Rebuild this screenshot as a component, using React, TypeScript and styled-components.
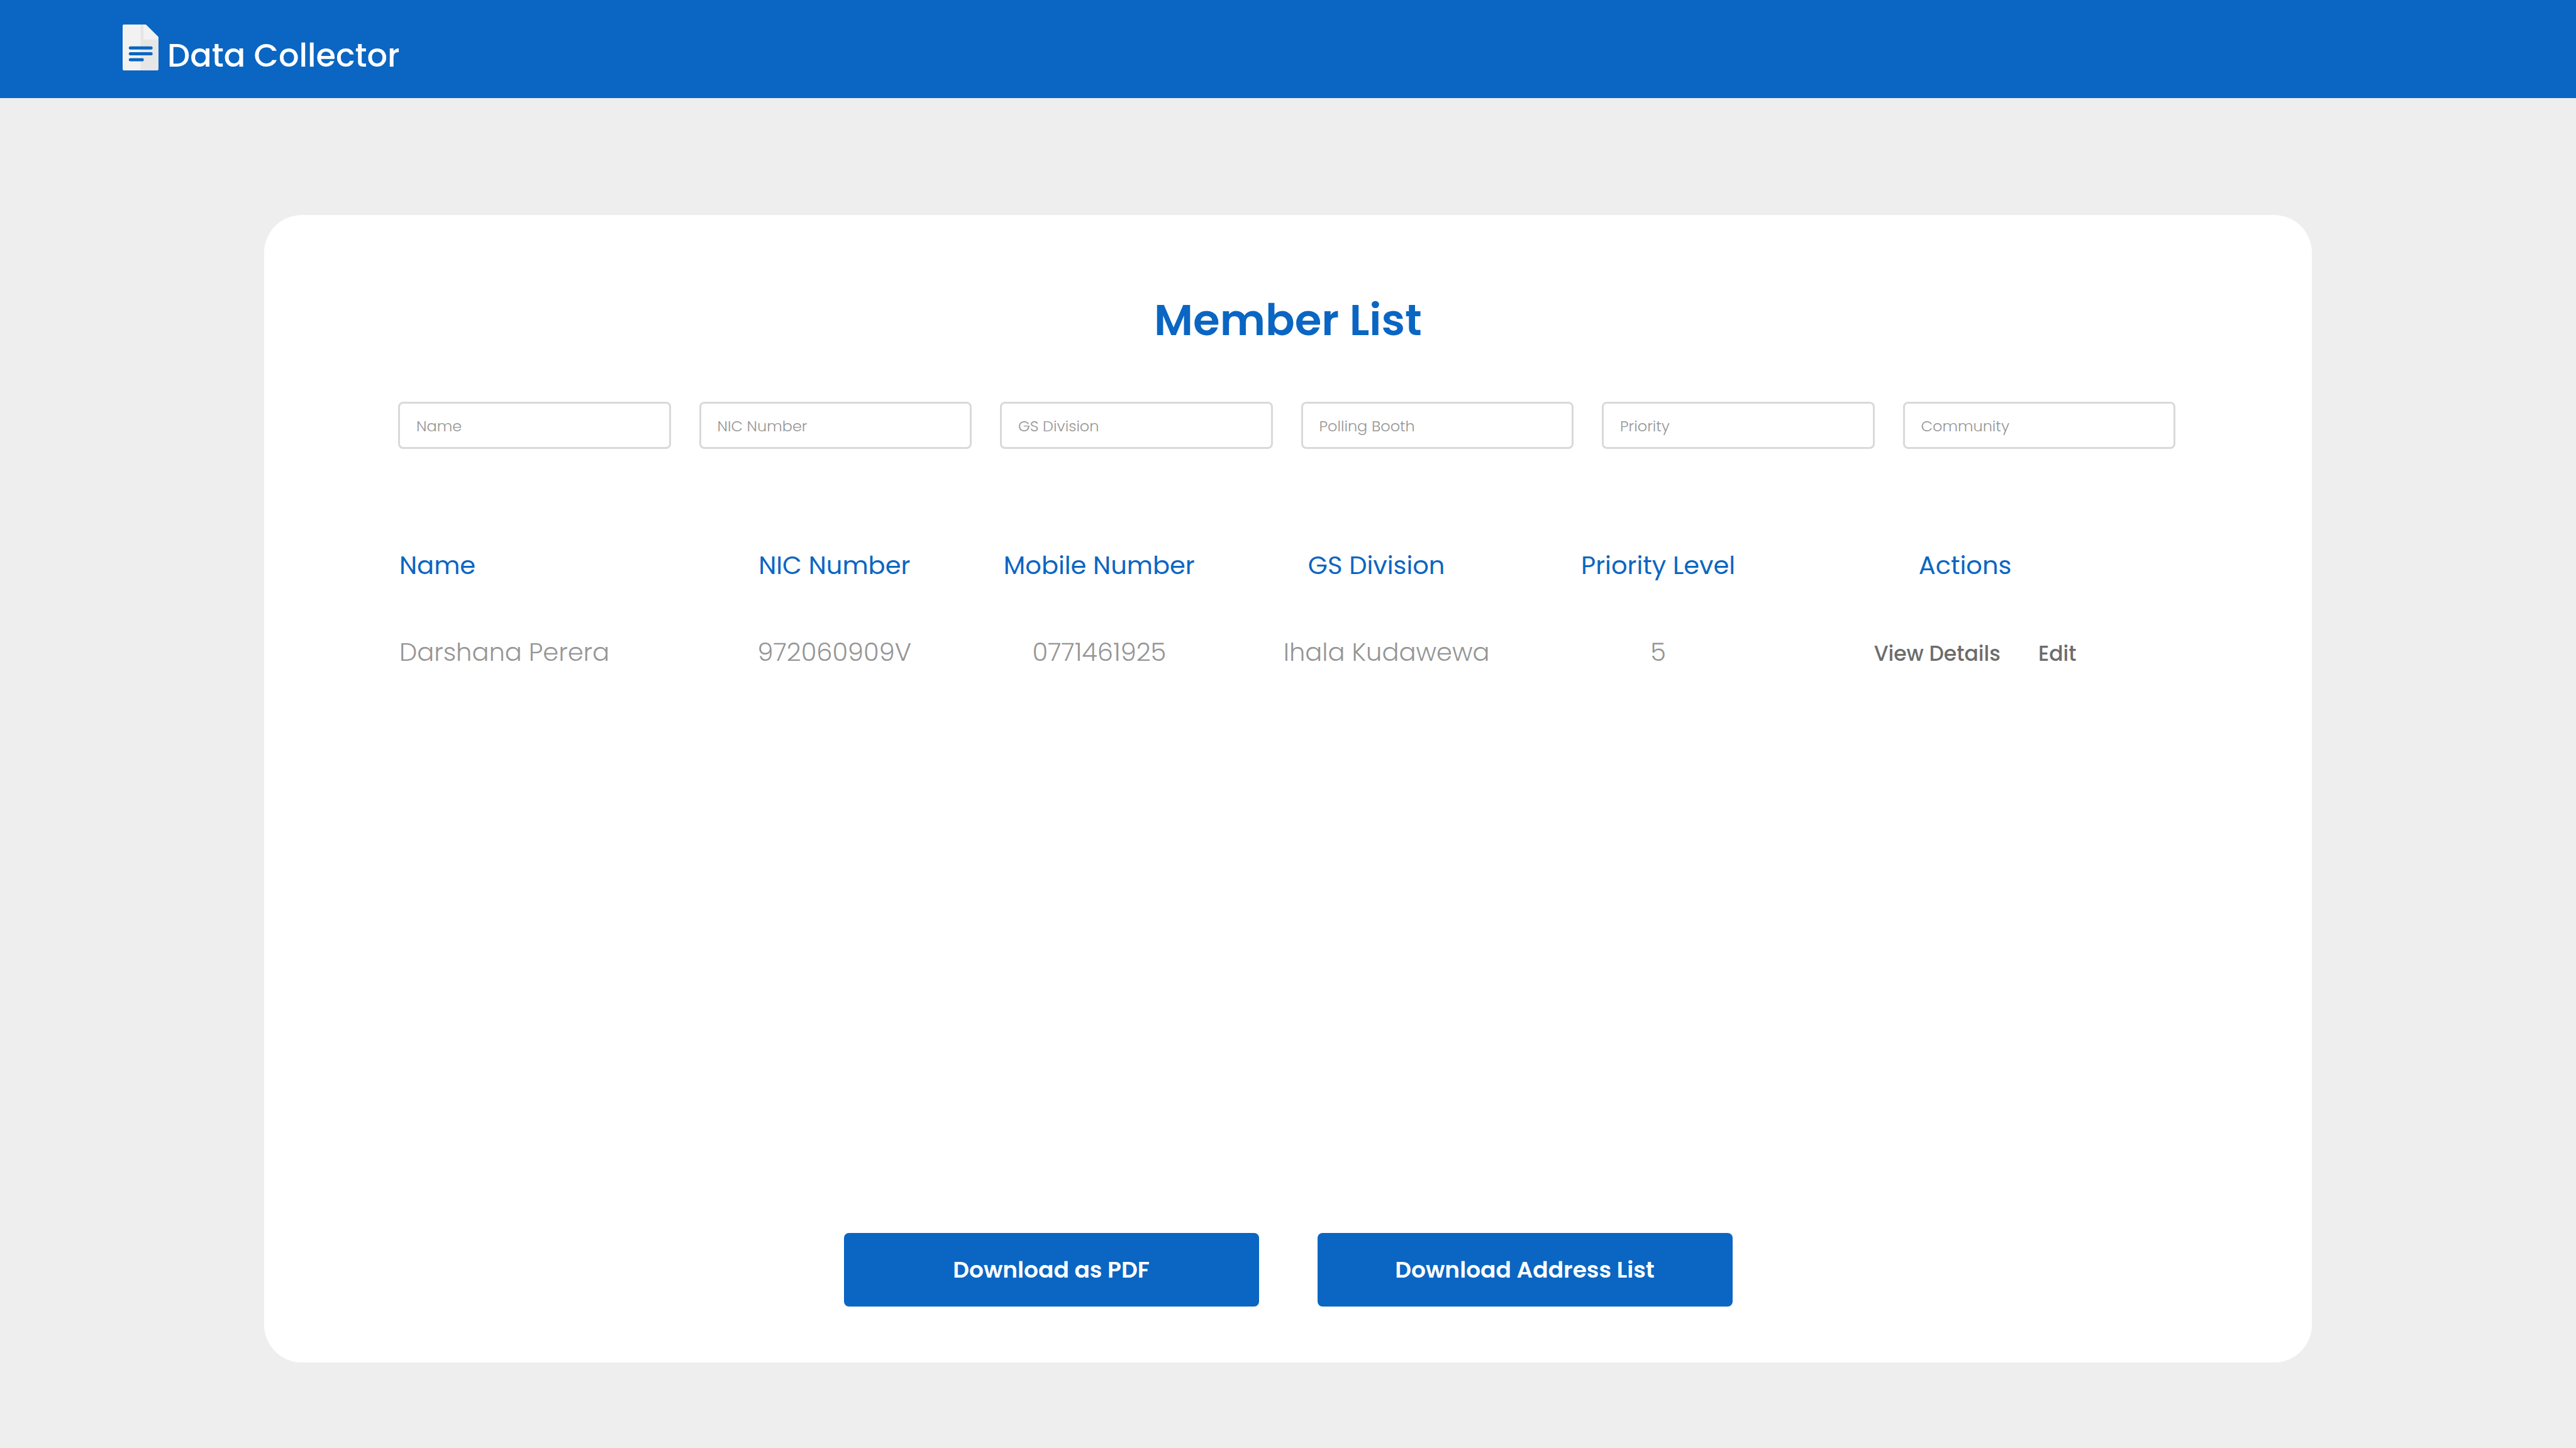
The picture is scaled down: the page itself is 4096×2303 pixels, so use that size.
import React from "react";
import styled, { createGlobalStyle } from "styled-components";

const colors = {
  brand: "#0a66c2",
  page: "#eeeeee",
  card: "#ffffff",
  border: "#d9d9d9",
  muted: "#959595",
  action: "#6c6c6c",
};

const GlobalStyle = createGlobalStyle`
  *, *::before, *::after {
    box-sizing: border-box;
  }

  body {
    margin: 0;
    background: ${colors.page};
    font-family: Poppins, Inter, "Open Sans", sans-serif;
  }

  button, input {
    font-family: inherit;
  }
`;

const Page = styled.div`
  display: flex;
  flex-direction: column;
  min-height: 100vh;
`;

const Header = styled.header`
  display: flex;
  align-items: flex-start;
  height: 156px;
  padding: 39px 195px 0;
  background: ${colors.brand};
`;

const Brand = styled.a`
  display: flex;
  align-items: flex-end;
  gap: 14px;
  color: #ffffff;
  font-size: 51px;
  font-weight: 500;
  line-height: 48px;
  text-decoration: none;
  white-space: nowrap;
`;

const BrandIcon = styled.svg`
  display: block;
  width: 57px;
  height: 73px;
`;

const Main = styled.main`
  display: flex;
  flex: 1;
  padding: 186px 420px 136px;
`;

const Card = styled.section`
  display: flex;
  flex: 1;
  flex-direction: column;
  min-width: 0;
  padding: 127px 213px 89px;
  border-radius: 60px;
  background: ${colors.card};
`;

const Title = styled.h1`
  margin: 0;
  color: ${colors.brand};
  font-size: 69px;
  font-weight: 600;
  line-height: 80px;
  text-align: center;
`;

const Content = styled.div`
  padding: 90px 4px 90px 0;
`;

const Filters = styled.form`
  display: grid;
  grid-template-columns: repeat(6, minmax(0, 1fr));
  gap: 45px;
`;

const FilterInput = styled.input`
  width: 100%;
  height: 75px;
  padding: 2px 26px 0;
  border: 3px solid ${colors.border};
  border-radius: 8px;
  outline: none;
  background: ${colors.card};
  color: ${colors.action};
  font-size: 24px;
  font-weight: 300;

  &::placeholder {
    color: ${colors.muted};
    opacity: 1;
  }

  &:focus {
    border-color: ${colors.brand};
  }
`;

const Table = styled.table`
  width: 100%;
  margin-top: 157px;
  border-collapse: collapse;
  table-layout: fixed;
  font-size: 40px;
  line-height: 56px;
`;

const Column = styled.col<{ $width?: string }>`
  width: ${(p) => p.$width ?? "auto"};
`;

type CellProps = { $align?: "left" | "center"; $before?: number; $after?: number };

const HeadCell = styled.th<CellProps>`
  padding: 0 ${(p) => p.$after ?? 0}px 0 ${(p) => p.$before ?? 0}px;
  color: ${colors.brand};
  font-weight: 400;
  text-align: ${(p) => p.$align ?? "center"};
  white-space: nowrap;
`;

const Cell = styled.td<CellProps>`
  padding: 82px ${(p) => p.$after ?? 0}px 0 ${(p) => p.$before ?? 0}px;
  color: ${colors.muted};
  font-weight: 300;
  text-align: ${(p) => p.$align ?? "center"};
  white-space: nowrap;
`;

const ActionLink = styled.a`
  color: ${colors.action};
  font-size: 33px;
  font-weight: 500;
  line-height: 40px;
  text-decoration: none;

  & + & {
    margin-left: 60px;
  }
`;

const Downloads = styled.div`
  display: flex;
  justify-content: center;
  gap: 93px;
  margin-top: auto;
`;

const DownloadButton = styled.button`
  width: 660px;
  height: 117px;
  padding: 0;
  border: 0;
  border-radius: 8px;
  background: ${colors.brand};
  color: #ffffff;
  cursor: pointer;
  font-size: 36px;
  font-weight: 600;
`;

const filters = ["Name", "NIC Number", "GS Division", "Polling Booth", "Priority", "Community"];

const members = [
  {
    name: "Darshana Perera",
    nic: "972060909V",
    mobile: "0771461925",
    division: "Ihala Kudawewa",
    priority: 5,
  },
];

function DocumentIcon() {
  return (
    <BrandIcon viewBox="0 0 57 73" aria-hidden="true">
      <path d="M2 0H29V73H2Q0 73 0 71V2Q0 0 2 0Z" fill="#f2f2f2" />
      <path d="M28.5 0H36.5L57 20V71Q57 73 55 73H28.5Z" fill="#e6e6e6" />
      <path d="M33 0H36Q37 0 38 1L56 19Q57 20 57 21V23.7H35Q33 23.7 33 21.7Z" fill="#f2f2f2" />
      <path
        d="M12.3 37.3H45.2M12.3 46.6H45.2M12.3 56H31.2"
        fill="none"
        stroke={colors.brand}
        strokeWidth="5"
        strokeLinecap="round"
      />
    </BrandIcon>
  );
}

export default function App() {
  return (
    <>
      <GlobalStyle />
      <Page>
        <Header>
          <Brand href="#">
            <DocumentIcon />
            Data Collector
          </Brand>
        </Header>
        <Main>
          <Card>
            <Title>Member List</Title>
            <Content>
              <Filters>
                {filters.map((label) => (
                  <FilterInput key={label} type="text" placeholder={label} aria-label={label} />
                ))}
              </Filters>
              <Table>
                <colgroup>
                  <Column $width="17.1%" />
                  <Column $width="14.9%" />
                  <Column $width="14.9%" />
                  <Column $width="16.3%" />
                  <Column $width="15.4%" />
                  <Column />
                </colgroup>
                <thead>
                  <tr>
                    <HeadCell $align="left" $before={2}>Name</HeadCell>
                    <HeadCell>NIC Number</HeadCell>
                    <HeadCell>Mobile Number</HeadCell>
                    <HeadCell>GS Division</HeadCell>
                    <HeadCell>Priority Level</HeadCell>
                    <HeadCell $after={64}>Actions</HeadCell>
                  </tr>
                </thead>
                <tbody>
                  {members.map((m) => (
                    <tr key={m.nic}>
                      <Cell $align="left" $before={2}>{m.name}</Cell>
                      <Cell>{m.nic}</Cell>
                      <Cell>{m.mobile}</Cell>
                      <Cell $before={32}>{m.division}</Cell>
                      <Cell>{m.priority}</Cell>
                      <Cell $after={32}>
                        <ActionLink href="#">View Details</ActionLink>
                        <ActionLink href="#">Edit</ActionLink>
                      </Cell>
                    </tr>
                  ))}
                </tbody>
              </Table>
            </Content>
            <Downloads>
              <DownloadButton type="button">Download as PDF</DownloadButton>
              <DownloadButton type="button">Download Address List</DownloadButton>
            </Downloads>
          </Card>
        </Main>
      </Page>
    </>
  );
}
